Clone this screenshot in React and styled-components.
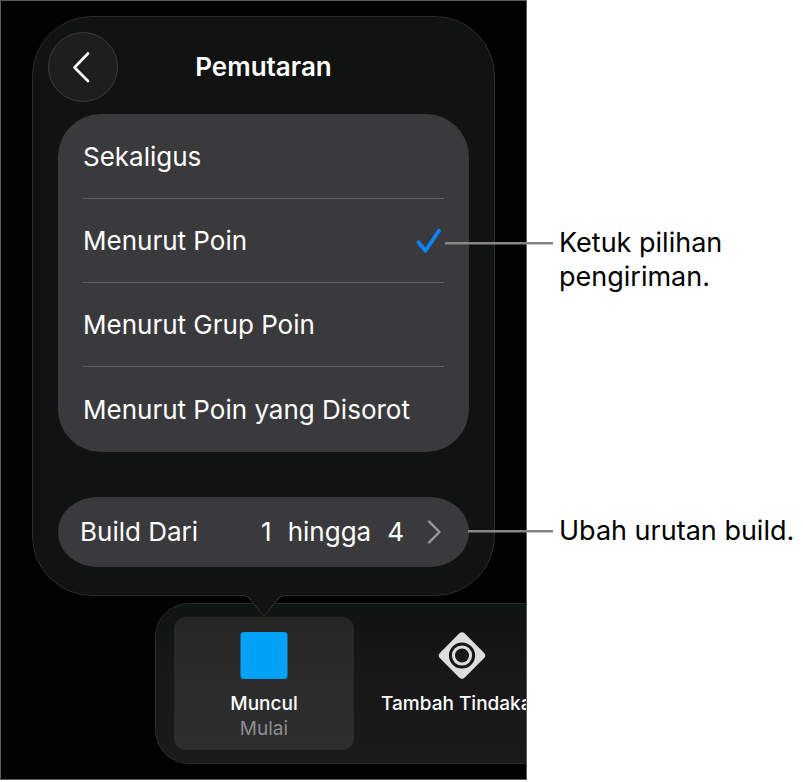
import React, { useState } from "react";
import styled, { createGlobalStyle } from "styled-components";

const GlobalStyle = createGlobalStyle`
  *, *::before, *::after { box-sizing: border-box; }
  body {
    margin: 0;
    background: #fff;
    font-family: Inter, "Liberation Sans", sans-serif;
  }
  button { font: inherit; color: inherit; border: 0; padding: 0; cursor: pointer; }
`;

const Figure = styled.main`
  display: grid;
  grid-template-columns: minmax(0, 527px) minmax(0, 1fr);
  align-items: start;
`;

const Screen = styled.section`
  border: 1px solid #5c5e5e;
  background: #000100;
  color: #fff;
  padding: 15px 0;
`;

const Popover = styled.div`
  position: relative;
  z-index: 1;
  margin: 0 31px;
  padding: 15px 25px 28px;
  border: 1px solid #2a2d2b;
  border-radius: 60px;
  background: #101311;
`;

const Tail = styled.svg`
  position: absolute;
  top: 100%;
  left: 50%;
  width: 48px;
  height: 23px;
  margin: -1px 0 0 -24px;
`;

const Header = styled.header`
  display: grid;
  grid-template-columns: 70px 1fr 70px;
  align-items: center;
  margin: 0 -10px 12px;
`;

const BackButton = styled.button`
  display: grid;
  place-items: center;
  height: 70px;
  border-radius: 50%;
  background: #1b201d;
  && { border: 1px solid #3a403c; }
`;

const Title = styled.h1`
  margin: 0;
  font-size: 26px;
  line-height: 32px;
  font-weight: 600;
  text-align: center;
`;

const OptionCard = styled.fieldset`
  margin: 0 0 45px;
  padding: 1px 25px;
  border: 0;
  border-radius: 43px;
  background: #3a3a3c;
  min-width: 0;
`;

const Option = styled.label`
  display: flex;
  align-items: center;
  justify-content: space-between;
  height: 84px;
  padding-top: 1px;
  font-size: 26px;
  line-height: 32px;
  cursor: pointer;
  &:not(:last-child) { border-bottom: 1px solid #626264; }
`;

const Radio = styled.input`
  appearance: none;
  width: 0;
  height: 0;
  margin: 0;
  order: 1;
`;

const OptionText = styled.span`
  flex: 1;
  white-space: nowrap;
`;

const BuildButton = styled.button`
  display: flex;
  align-items: center;
  width: 100%;
  height: 70px;
  && { padding: 0 27px 0 22px; }
  border-radius: 39px / 35px;
  background: #3a3a3c;
  font-size: 26px;
  line-height: 32px;
  white-space: nowrap;
`;

const BuildRange = styled.span`
  display: flex;
  gap: 16px;
  margin: 0 23px 0 auto;
`;

const ToolbarClip = styled.div`
  overflow: hidden;
  padding: 7px 0 0 154px;
`;

const Toolbar = styled.div`
  display: flex;
  gap: 18px;
  width: 600px;
  padding: 13px 18px;
  border: 1px solid #2b2d2c;
  border-radius: 34px;
  background: linear-gradient(#0f1511, #171817 50%, #1a1a1a);
`;

const ToolbarItem = styled.button`
  display: flex;
  flex-direction: column;
  align-items: center;
  flex: none;
  width: 180px;
  height: 133px;
  && { padding-top: 15px; }
  border-radius: 12px;
  background: ${(p) => (p.$selected ? "linear-gradient(#242624, #2c2c2c 50%, #2d2d2d)" : "transparent")};
`;

const ItemIcon = styled.svg`
  width: 48px;
  height: 48px;
  margin-bottom: 11px;
`;

const ItemTitle = styled.span`
  font-size: 19px;
  line-height: 25px;
  font-weight: 500;
  white-space: nowrap;
`;

const ItemSubtitle = styled.span`
  font-size: 19px;
  line-height: 25px;
  color: #8d8d93;
`;

const Notes = styled.aside`
  display: flex;
  flex-direction: column;
  gap: 220px;
  padding: 226px 0 0 32px;
`;

const Note = styled.p`
  position: relative;
  margin: 0;
  color: #000;
  font-size: 27px;
  line-height: 34px;

  &::before {
    content: "";
    position: absolute;
    z-index: 2;
    top: 16px;
    right: 100%;
    width: ${(p) => p.$leader};
    height: 3px;
    margin-right: 6px;
    background: linear-gradient(#868686 2px, #86868680 2px);
  }
`;

const NoteText = styled.span`
  display: block;
  max-width: 240px;
`;

const choices = ["Sekaligus", "Menurut Poin", "Menurut Grup Poin", "Menurut Poin yang Disorot"];

const BackIcon = () => (
  <svg width="20" height="32" viewBox="0 0 20 32" fill="none" aria-hidden="true">
    <path d="M15 2.5 1.5 16.5 15 30" stroke="#fff" strokeWidth="2.6" strokeLinecap="round" strokeLinejoin="round" />
  </svg>
);

const CheckIcon = () => (
  <svg width="28" height="26" viewBox="0 0 28 26" fill="none" aria-hidden="true">
    <path d="M2.5 14.3 9.5 22.8 23 2.8" stroke="#0a84ff" strokeWidth="3.8" strokeLinecap="round" strokeLinejoin="round" />
  </svg>
);

const ForwardIcon = () => (
  <svg width="15" height="26" viewBox="0 0 15 26" fill="none" aria-hidden="true">
    <path d="M2 2.5 12.5 13 2 23.5" stroke="#98989b" strokeWidth="2.4" strokeLinecap="round" strokeLinejoin="round" />
  </svg>
);

export default function App() {
  const [choice, setChoice] = useState("Menurut Poin");
  return (
    <>
      <GlobalStyle />
      <Figure>
        <Screen>
          <Popover>
            <Header>
              <BackButton type="button" aria-label="Kembali">
                <BackIcon />
              </BackButton>
              <Title>Pemutaran</Title>
            </Header>
            <OptionCard aria-label="Pemutaran">
              {choices.map((name) => (
                <Option key={name}>
                  <Radio type="radio" name="delivery" checked={choice === name} onChange={() => setChoice(name)} />
                  <OptionText>{name}</OptionText>
                  {choice === name && <CheckIcon />}
                </Option>
              ))}
            </OptionCard>
            <BuildButton type="button">
              <span>Build Dari</span>
              <BuildRange>
                <span>1</span>
                <span>hingga</span>
                <span>4</span>
              </BuildRange>
              <ForwardIcon />
            </BuildButton>
            <Tail viewBox="0 0 48 23" fill="none" aria-hidden="true">
              <path d="M0 0H48V1.5C43 1.5 41 2 38 5L26.5 19.5Q24 23 21.5 19.5L10 5C7 2 5 1.5 0 1.5Z" fill="#101311" />
              <path d="M0 1.5C5 1.5 7 2 10 5L21.5 19.5Q24 23 26.5 19.5L38 5C41 2 43 1.5 48 1.5" stroke="#323533" />
            </Tail>
          </Popover>
          <ToolbarClip>
            <Toolbar>
              <ToolbarItem type="button" $selected>
                <ItemIcon viewBox="0 0 48 48" aria-hidden="true">
                  <rect x="0.5" y="0" width="47" height="47" rx="3.5" fill="#00a1f6" />
                </ItemIcon>
                <ItemTitle>Muncul</ItemTitle>
                <ItemSubtitle>Mulai</ItemSubtitle>
              </ToolbarItem>
              <ToolbarItem type="button">
                <ItemIcon viewBox="0 0 48 48" aria-hidden="true">
                  <rect x="6.5" y="6" width="35" height="35" rx="4" transform="rotate(45 24 23.5)" fill="#dededc" />
                  <circle cx="24" cy="23.5" r="11.6" fill="none" stroke="#151815" strokeWidth="3" />
                  <circle cx="24" cy="23.5" r="7" fill="#151815" />
                </ItemIcon>
                <ItemTitle>Tambah Tindakan</ItemTitle>
              </ToolbarItem>
            </Toolbar>
          </ToolbarClip>
        </Screen>
        <Notes>
          <Note $leader="108px">
            <NoteText>Ketuk pilihan pengiriman.</NoteText>
          </Note>
          <Note $leader="85px">
            <NoteText>Ubah urutan build.</NoteText>
          </Note>
        </Notes>
      </Figure>
    </>
  );
}
